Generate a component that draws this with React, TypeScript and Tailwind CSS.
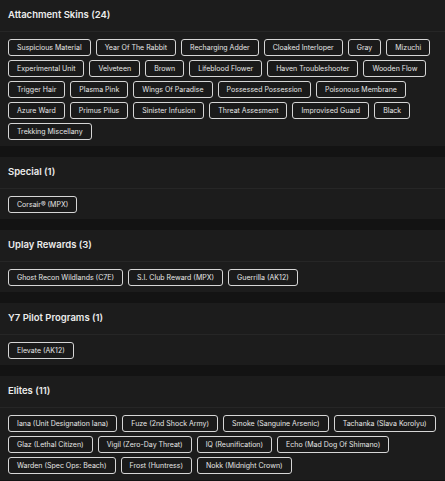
const sections: { title: string; items: string[] }[] = [
  {
    title: "Attachment Skins (24)",
    items: [
      "Suspicious Material",
      "Year Of The Rabbit",
      "Recharging Adder",
      "Cloaked Interloper",
      "Gray",
      "Mizuchi",
      "Experimental Unit",
      "Velveteen",
      "Brown",
      "Lifeblood Flower",
      "Haven Troubleshooter",
      "Wooden Flow",
      "Trigger Hair",
      "Plasma Pink",
      "Wings Of Paradise",
      "Possessed Possession",
      "Poisonous Membrane",
      "Azure Ward",
      "Primus Pilus",
      "Sinister Infusion",
      "Threat Assesment",
      "Improvised Guard",
      "Black",
      "Trekking Miscellany",
    ],
  },
  { title: "Special (1)", items: ["Corsair® (MPX)"] },
  {
    title: "Uplay Rewards (3)",
    items: ["Ghost Recon Wildlands (C7E)", "S.I. Club Reward (MPX)", "Guerrilla (AK12)"],
  },
  { title: "Y7 Pilot Programs (1)", items: ["Elevate (AK12)"] },
  {
    title: "Elites (11)",
    items: [
      "Iana (Unit Designation Iana)",
      "Fuze (2nd Shock Army)",
      "Smoke (Sanguine Arsenic)",
      "Tachanka (Slava Korolyu)",
      "Glaz (Lethal Citizen)",
      "Vigil (Zero-Day Threat)",
      "IQ (Reunification)",
      "Echo (Mad Dog Of Shimano)",
      "Warden (Spec Ops: Beach)",
      "Frost (Huntress)",
      "Nokk (Midnight Crown)",
    ],
  },
];

function Tag({ label }: { label: string }) {
  return (
    <span className="h-[17px] flex items-center px-[8px] rounded-[3px] border border-[#d6d6d6] bg-[#1a1a1a] text-[#e6e6e6] text-[7px] leading-none whitespace-nowrap">
      {label}
    </span>
  );
}

export default function App() {
  return (
    <div
      className="min-h-[481px] bg-[#131313] flex flex-col gap-[11px]"
      style={{ fontFamily: "Inter, 'Noto Sans', sans-serif" }}
    >
      {sections.map((s) => (
        <section key={s.title} className="bg-[#1c1c1c]">
          <div className="h-[32px] flex items-center px-[8px] border-b border-[#262626]">
            <h2 className="text-[9.5px] font-semibold text-[#ececec]">{s.title}</h2>
          </div>
          <div className="flex flex-wrap gap-x-[5px] gap-y-[4px] px-[8px] pt-[7px] pb-[6px]">
            {s.items.map((i) => (
              <Tag key={i} label={i} />
            ))}
          </div>
        </section>
      ))}
    </div>
  );
}
